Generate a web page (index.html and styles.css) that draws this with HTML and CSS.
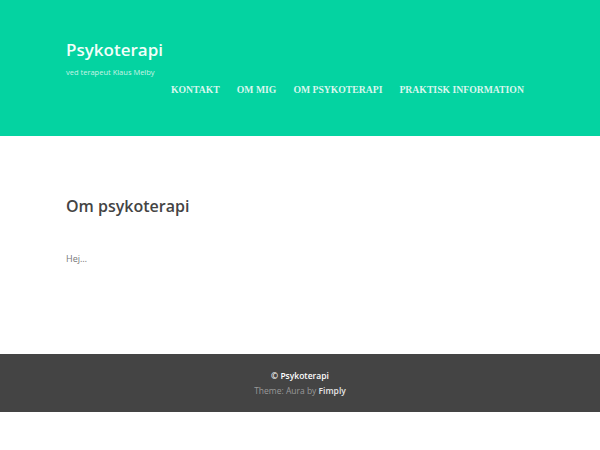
FILE: index.html
```html
<!DOCTYPE html>
<html lang="da">
<head>
<meta charset="utf-8">
<title>Psykoterapi</title>
<link rel="stylesheet" href="styles.css">
</head>
<body>
<header class="site-header">
  <div class="wrap header-inner">
    <div class="branding">
      <div class="site-title">Psykoterapi</div>
      <div class="site-desc">ved terapeut Klaus Melby</div>
    </div>
    <nav class="nav">
      <a href="#">KONTAKT</a>
      <a href="#">OM MIG</a>
      <a href="#">OM PSYKOTERAPI</a>
      <a href="#">PRAKTISK INFORMATION</a>
    </nav>
  </div>
</header>
<main class="wrap content">
  <h1 class="page-title">Om psykoterapi</h1>
  <p class="text">Hej…</p>
</main>
<footer class="site-footer">
  <div class="copy">© Psykoterapi</div>
  <div class="credit">Theme: Aura by <b>Fimply</b></div>
</footer>
</body>
</html>
```
FILE: styles.css
```css
html, body { margin: 0; padding: 0; background: #fff; }
body { font-family: "Open Sans", "Noto Sans", sans-serif; }
.wrap { padding-left: 66px; padding-right: 66px; }
.site-header { background: #04d3a1; height: 136px; box-sizing: border-box; padding-top: 38px; }
.header-inner { display: flex; flex-direction: column; }
.site-title { color: #f2fffa; font-size: 17px; font-weight: 600; line-height: 24px; }
.site-desc { color: #c9f3e6; font-size: 7.5px; line-height: 10px; margin-top: 5px; }
.nav { display: flex; gap: 17px; padding-left: 105px; margin-top: 6px; }
.nav a { color: #d8f7ee; text-decoration: none; font-family: "Liberation Serif", serif; font-weight: bold; font-size: 9.7px; line-height: 14px; }
.content { padding-top: 58px; height: 218px; box-sizing: border-box; }
.page-title { margin: 0; color: #444; font-size: 16px; font-weight: 600; line-height: 24px; }
.text { margin: 34px 0 0; color: #777; font-size: 9px; line-height: 14px; }
.site-footer { background: #444; height: 58px; display: flex; flex-direction: column; align-items: center; padding-top: 15px; box-sizing: border-box; }
.copy { color: #fff; font-size: 8.5px; font-weight: 600; line-height: 14px; }
.credit { color: #999; font-size: 8.5px; line-height: 14px; margin-top: 1px; }
.credit b { color: #e6e6e6; font-weight: 600; }
```
